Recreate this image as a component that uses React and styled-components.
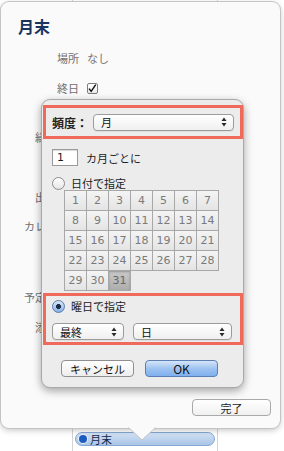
import React from "react";
import styled, { createGlobalStyle } from "styled-components";

const GlobalStyle = createGlobalStyle`
  html, body { margin: 0; padding: 0; background: #fff; }
  body {
    font-family: "DejaVu Sans", "Noto Sans CJK JP", sans-serif;
    font-size: 11px;
    color: #222;
  }
`;

const fields = [
    { label: "場所", value: "なし", top: 14 },
    { label: "終日", check: true, top: 14 },
    { label: "繰り返し", top: 33 },
    { label: "出席依頼", top: 44 },
    { label: "カレンダー", top: 13 },
    { label: "予定の状況", top: 55 },
    { label: "添付資料", top: 14 }
];

const days = Array.from({ length: 31 }, (_, i) => i + 1);

const Arrows = () => (
    <svg width="6" height="10" viewBox="0 0 6 10">
        <path d="M3 0.5 L5.5 4 L0.5 4 Z" fill="#2b2b2b" />
        <path d="M3 9.5 L5.5 6 L0.5 6 Z" fill="#2b2b2b" />
    </svg>
);

const Select = ({ label, width }) => (
    <SelectBox $width={width}>
        <span>{label}</span>
        <Arrows />
    </SelectBox>
);

const App = () => {
    return (
        <>
            <GlobalStyle />
            <Page>
                <DayColumn $width={73} />
                <DayColumn $width={145}>
                    <EventPill>
                        <EventDot />
                        月末
                    </EventPill>
                </DayColumn>
                <DayColumn $last />

                <Popover>
                    <Title>月末</Title>
                    {fields.map(f => (
                        <Field key={f.label} $top={f.top}>
                            <Label>{f.label}</Label>
                            {f.value && <Value>{f.value}</Value>}
                            {f.check && (
                                <Check>
                                    <svg width="11" height="11" viewBox="0 0 11 11">
                                        <path d="M2.2 5.6 L4.6 8.6 L9.6 1.2" stroke="#111" strokeWidth="1.6" fill="none" />
                                    </svg>
                                </Check>
                            )}
                        </Field>
                    ))}
                    <Footer>
                        <DoneButton>完了</DoneButton>
                    </Footer>
                    <Tail width="28" height="14" viewBox="0 0 28 14">
                        <path d="M0 0 L14 13 L28 0 Z" fill="#fafafa" />
                        <path d="M0.5 0.5 L14 13 L27.5 0.5" stroke="#c4c4c4" fill="none" />
                    </Tail>
                </Popover>

                <Sheet>
                    <Marked $top={5}>
                        <FreqRow>
                            <FreqLabel>頻度：</FreqLabel>
                            <Select label="月" width={141} />
                        </FreqRow>
                    </Marked>

                    <IntervalRow>
                        <NumberField>1</NumberField>
                        <span>カ月ごとに</span>
                    </IntervalRow>

                    <RadioRow $top={9} $left={10}>
                        <Radio />
                        <span>日付で指定</span>
                    </RadioRow>

                    <DayGrid>
                        {days.map(d => (
                            <DayCell key={d} $on={d === 31}>{d}</DayCell>
                        ))}
                    </DayGrid>

                    <Marked $top={2}>
                        <WeekBlock>
                            <RadioRow $top={0} $left={6}>
                                <Radio $on />
                                <span>曜日で指定</span>
                            </RadioRow>
                            <SelectRow>
                                <Select label="最終" width={72} />
                                <Select label="日" width={99} />
                            </SelectRow>
                        </WeekBlock>
                    </Marked>

                    <ButtonRow>
                        <SheetButton>キャンセル</SheetButton>
                        <SheetButton $primary>OK</SheetButton>
                    </ButtonRow>
                </Sheet>
            </Page>
        </>
    );
};

export default App;

const Page = styled.div`
  position: relative;
  width: 284px;
  height: 451px;
  overflow: hidden;
  display: flex;
  background: #fff;
`;

const DayColumn = styled.div`
  flex: ${p => (p.$last ? "1" : `0 0 ${p.$width}px`)};
  box-sizing: border-box;
  border-right: ${p => (p.$last ? "none" : "1px solid #d4d4d4")};
  padding-top: 432px;
`;

const EventPill = styled.div`
  box-sizing: border-box;
  margin: 0 2px;
  height: 14px;
  border-radius: 7px;
  border: 1px solid #86a8d6;
  background: linear-gradient(#d3e2f4, #a9c4e6);
  display: flex;
  align-items: center;
  gap: 3px;
  padding-left: 3px;
  font-family: "Noto Sans CJK JP", sans-serif;
  font-size: 11px;
  line-height: 12px;
  color: #13294d;
`;

const EventDot = styled.span`
  width: 8px;
  height: 8px;
  border-radius: 50%;
  background: #1d5cbf;
  box-shadow: 0 0 0 1px #e8f0fb;
`;

const Popover = styled.div`
  position: absolute;
  left: 1px;
  top: 2px;
  width: 279px;
  height: 426px;
  box-sizing: border-box;
  border-radius: 8px;
  background: #fafafa;
  box-shadow: 0 0 0 1px #c4c4c4, 0 2px 6px rgba(0, 0, 0, 0.25);
  display: flex;
  flex-direction: column;
  padding: 14px 0 12px;
`;

const Title = styled.div`
  padding-left: 17px;
  font-family: "Noto Sans CJK JP", sans-serif;
  font-size: 16px;
  line-height: 20px;
  font-weight: 700;
  color: #1a335f;
`;

const Field = styled.div`
  margin-top: ${p => p.$top}px;
  display: flex;
  align-items: center;
  gap: 8px;
  height: 16px;
  font-family: "Noto Sans CJK JP", sans-serif;
  font-size: 11px;
`;

const Label = styled.div`
  width: 78px;
  text-align: right;
  white-space: nowrap;
  color: #6f6f6f;
`;

const Value = styled.div`
  color: #777;
`;

const Check = styled.div`
  width: 11px;
  height: 11px;
  box-sizing: border-box;
  border: 1px solid #7d7d7d;
  border-radius: 2px;
  background: linear-gradient(#fff, #ececec);
  display: flex;

  svg { margin: -1px 0 0 -1px; }
`;

const Footer = styled.div`
  margin-top: auto;
  display: flex;
  justify-content: flex-end;
  padding-right: 9px;
`;

const DoneButton = styled.div`
  width: 79px;
  height: 17px;
  box-sizing: border-box;
  border: 1px solid #a9a9a9;
  border-radius: 4px;
  background: linear-gradient(#ffffff, #f0f0f0);
  display: flex;
  align-items: center;
  justify-content: center;
  font-family: "Noto Sans CJK JP", sans-serif;
  font-size: 11px;
  color: #222;
`;

const Tail = styled.svg`
  position: absolute;
  left: 127px;
  bottom: -13px;
`;

const Sheet = styled.div`
  position: absolute;
  left: 41px;
  top: 99px;
  width: 203px;
  height: 289px;
  box-sizing: border-box;
  border: 1px solid #a9a9a9;
  border-radius: 9px;
  background: #ececec;
  box-shadow: 0 3px 8px rgba(0, 0, 0, 0.35);
  display: flex;
  flex-direction: column;
  font-family: "Noto Sans CJK JP", sans-serif;
  font-size: 11px;
  color: #1c1c1c;
`;

const Marked = styled.div`
  margin: ${p => p.$top}px 0 0 1px;
  border: 3px solid #f06a5c;
`;

const FreqRow = styled.div`
  height: 28px;
  display: flex;
  align-items: center;
  gap: 0;
  padding: 0 6px;
  justify-content: space-between;
`;

const FreqLabel = styled.span`
  font-weight: 700;
  font-size: 12px;
  color: #222;
`;

const SelectBox = styled.div`
  width: ${p => p.$width}px;
  height: 17px;
  box-sizing: border-box;
  border: 1px solid #9b9b9b;
  border-radius: 4px;
  background: linear-gradient(#ffffff, #efefef);
  box-shadow: 0 1px 0 rgba(0, 0, 0, 0.06);
  display: flex;
  align-items: center;
  justify-content: space-between;
  padding: 0 6px 0 7px;
  font-size: 11px;
  color: #111;
`;

const IntervalRow = styled.div`
  margin-top: 10px;
  padding-left: 10px;
  display: flex;
  align-items: center;
  gap: 8px;
`;

const NumberField = styled.div`
  width: 26px;
  height: 17px;
  box-sizing: border-box;
  border: 1px solid #9a9a9a;
  background: #fff;
  box-shadow: inset 0 1px 1px rgba(0, 0, 0, 0.15);
  padding-left: 4px;
  font-family: "DejaVu Sans", sans-serif;
  font-size: 11px;
  line-height: 15px;
`;

const RadioRow = styled.div`
  margin-top: ${p => p.$top}px;
  padding-left: ${p => p.$left}px;
  height: 16px;
  display: flex;
  align-items: center;
  gap: 6px;
`;

const Radio = styled.span`
  width: 13px;
  height: 13px;
  box-sizing: border-box;
  border-radius: 50%;
  border: 1px solid ${p => (p.$on ? "#5a7cad" : "#8c8c8c")};
  background: ${p =>
      p.$on
          ? "radial-gradient(circle, #1c2b44 0 2.2px, transparent 2.8px), linear-gradient(#d8e6f8, #86b0e6)"
          : "linear-gradient(#ffffff, #e6e6e6)"};
`;

const DayGrid = styled.div`
  margin-left: 23px;
  display: grid;
  grid-template-columns: repeat(7, 22px);
  grid-auto-rows: 20px;
  width: 155px;
`;

const DayCell = styled.div`
  box-sizing: border-box;
  border-right: 1px solid #a8a8a8;
  border-bottom: 1px solid #a8a8a8;
  background: ${p => (p.$on ? "linear-gradient(#c9c9c9, #adadad)" : "linear-gradient(#f4f4f4, #e4e4e4)")};
  box-shadow: ${p => (p.$on ? "inset 0 1px 2px rgba(0,0,0,0.25)" : "none")};
  display: flex;
  align-items: center;
  justify-content: center;
  font-family: "DejaVu Sans", sans-serif;
  font-size: 11px;
  color: ${p => (p.$on ? "#666" : "#7a7a7a")};

  &:nth-child(7n + 1) { border-left: 1px solid #a8a8a8; width: 23px; margin-left: -1px; }
  &:nth-child(-n + 7) { border-top: 1px solid #a8a8a8; }
  &:nth-child(-n + 7) { height: 21px; margin-top: -1px; }
`;

const WeekBlock = styled.div`
  padding: 2px 0 2px;
`;

const SelectRow = styled.div`
  margin-top: 9px;
  padding-left: 6px;
  display: flex;
  gap: 9px;
`;

const ButtonRow = styled.div`
  margin-top: 15px;
  padding-left: 19px;
  display: flex;
  gap: 11px;
`;

const SheetButton = styled.div`
  width: 73px;
  height: 17px;
  box-sizing: border-box;
  border-radius: 4px;
  border: 1px solid ${p => (p.$primary ? "#5b7fb5" : "#8f8f8f")};
  background: ${p => (p.$primary ? "linear-gradient(#d6e5f9, #9ec3f1 50%, #7fb0ee)" : "linear-gradient(#ffffff, #ededed)")};
  display: flex;
  align-items: center;
  justify-content: center;
  font-size: ${p => (p.$primary ? "12px" : "11px")};
  color: #111;
`;
